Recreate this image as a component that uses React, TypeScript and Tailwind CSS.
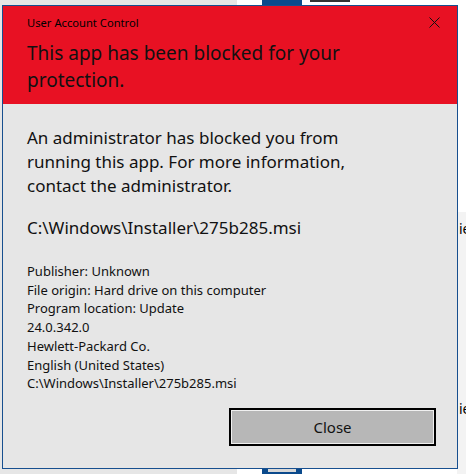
import React from "react";

export default function App() {
  const font = { fontFamily: '"Noto Sans", "Open Sans", sans-serif' };
  const details = [
    "Publisher: Unknown",
    "File origin: Hard drive on this computer",
    "Program location: Update",
    "24.0.342.0",
    "Hewlett-Packard Co.",
    "English (United States)",
    "C:\\Windows\\Installer\\275b285.msi",
  ];
  return (
    <div className="relative w-[466px] h-[474px] overflow-hidden bg-white" style={font}>
      {/* desktop background */}
      <div className="absolute left-0 top-0 w-[237px] h-[474px] bg-[#e6e6e6]" />
      <div className="absolute left-[457px] top-[212px] w-[9px] h-[262px] bg-[#f3f3f3]" />
      <div className="absolute left-[262px] top-0 w-[40px] h-[5px] bg-[#0b4a8c]" />
      <div className="absolute left-[262px] top-[468px] w-[40px] h-[6px] bg-[#0b4a8c]">
        <div className="mx-[6px] h-[4px] bg-[#d8d8d8]" />
      </div>
      <div className="absolute left-[310px] top-0 w-[40px] h-[2px] bg-[#333]" />
      <div className="absolute left-[459px] top-[222px] text-[14px] leading-none text-black">ie</div>
      <div className="absolute left-[459px] top-[402px] text-[14px] leading-none text-black">ie</div>

      {/* dialog window */}
      <div className="absolute left-[2px] top-[5px] w-[456px] h-[464px] border border-[#174f8f] bg-[#e6e6e6] flex flex-col">
        <div className="bg-[#e81123] h-[98px] px-[24px] pt-[8px] relative">
          <div className="text-[11.2px] leading-[17px] text-black">User Account Control</div>
          <div className="mt-[9px] text-[19px] leading-[27px] text-[#111] w-[340px]">
            This app has been blocked for your protection.
          </div>
          <svg className="absolute right-[17px] top-[11px]" width="11" height="11" viewBox="0 0 11 11">
            <path d="M0.5 0.5 L10.5 10.5 M10.5 0.5 L0.5 10.5" stroke="#111" strokeWidth="1" fill="none" />
          </svg>
        </div>
        <div className="px-[24px] pt-[22px] flex-1 flex flex-col">
          <div className="text-[17px] leading-[24px] text-[#111]">
            An administrator has blocked you from<br />
            running this app. For more information,<br />
            contact the administrator.
          </div>
          <div className="mt-[18px] text-[17px] leading-[24px] text-[#111]">
            C:\Windows\Installer\275b285.msi
          </div>
          <div className="mt-[22px] flex flex-col text-[13px] leading-[18.7px] text-[#111]">
            {details.map((d) => (
              <div key={d}>{d}</div>
            ))}
          </div>
          <div className="flex justify-end mt-[15px] mr-[-3px]">
            <button className="w-[207px] h-[38px] border-2 border-black bg-[#b7b7b7] text-[15px] text-[#111] shadow-[inset_0_0_0_1px_#f0f0f0]">
              Close
            </button>
          </div>
        </div>
      </div>
    </div>
  );
}
